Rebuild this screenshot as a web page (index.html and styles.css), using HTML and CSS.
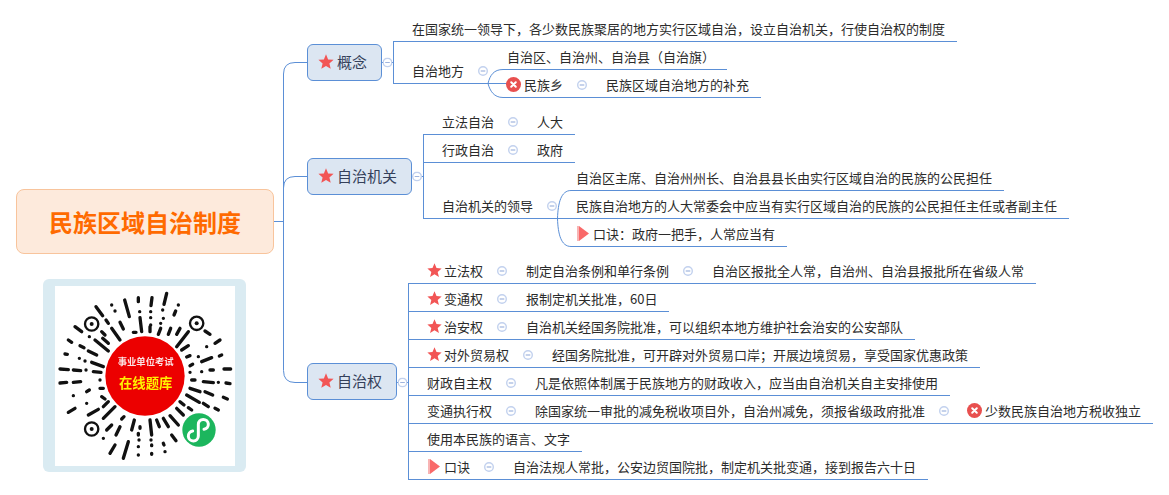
FILE: index.html
```html
<!DOCTYPE html>
<html lang="zh">
<head>
<meta charset="utf-8">
<title>民族区域自治制度</title>
<link rel="stylesheet" href="styles.css">
</head>
<body>
<svg class="defs" width="0" height="0" aria-hidden="true">
  <symbol id="fold" viewBox="0 0 10 10"><circle cx="5" cy="5" r="4.3" fill="#fff" stroke="#c2d1ee" stroke-width="1.4"/><path d="M2.7 5H7.3" stroke="#9fb4de" stroke-width="1.2"/></symbol>
  <symbol id="star" viewBox="0 0 24 24"><path d="M12 .5L15.2 8.1 23.4 8.8 17.1 14.2 19.05 22.2 12 17.9 4.95 22.2 6.9 14.2 .6 8.8 8.8 8.1z" fill="#f25555"/></symbol>
  <symbol id="no" viewBox="0 0 15 15"><circle cx="7.5" cy="7.5" r="7.5" fill="#e8504f"/><path d="M5.2 5.2l4.6 4.6M9.8 5.2l-4.6 4.6" stroke="#fff" stroke-width="2" stroke-linecap="round"/></symbol>
  <symbol id="flag" viewBox="0 0 12 15"><rect x="0" y="0" width="2" height="15" fill="#f8b4b4"/><path d="M2 0L12 7.5 2 15z" fill="#f96a6a"/></symbol>
</svg>

<main class="canvas">
  <svg class="links" width="1169" height="495" viewBox="0 0 1169 495" fill="none" stroke="#5b8fd6">
    <path d="M274 221.5H283.5M307 62.5H295Q283.5 62.5 283.5 74V370.5Q283.5 382.5 295 382.5H307M283.5 188Q283.5 176.5 295 176.5H307"/>
    <path d="M381 62.5H393.5M393.5 41V84"/>
    <path d="M488 83.5C490 75 494 69.5 503 69.5M488 83.5C490 91 494 97.5 503 97.5"/>
    <path d="M410 176.5H423.5M423.5 134V219"/>
    <path d="M557.5 218.5C558 203 561 190.5 571 190.5M557.5 218.5C558 234 561 246.5 571 246.5"/>
    <path d="M396 382.5H408.5"/>
    <use href="#fold" x="382.5" y="57.5" width="10" height="10"/>
    <use href="#fold" x="412" y="171.5" width="10" height="10"/>
    <use href="#fold" x="397.5" y="377.5" width="10" height="10"/>
  </svg>

  <div class="root">民族区域自治制度</div>

  <div class="topic topic-concept"><svg class="ico-topic"><use href="#star"/></svg>概念</div>
  <div class="topic topic-organ"><svg class="ico-topic"><use href="#star"/></svg>自治机关</div>
  <div class="topic topic-power"><svg class="ico-topic"><use href="#star"/></svg>自治权</div>

  <section class="col col-concept">
    <div class="row">在国家统一领导下，各少数民族聚居的地方实行区域自治，设立自治机关，行使自治权的制度</div>
    <div class="row tall-42 end-fold">自治地方<svg class="fold"><use href="#fold"/></svg></div>
  </section>
  <section class="col col-places">
    <div class="row pad-text">自治区、自治州、自治县（自治旗）</div>
    <div class="row"><svg class="ico-no"><use href="#no"/></svg>民族乡<svg class="fold"><use href="#fold"/></svg>民族区域自治地方的补充</div>
  </section>

  <section class="col col-organ">
    <div class="row">立法自治<svg class="fold"><use href="#fold"/></svg>人大</div>
    <div class="row">行政自治<svg class="fold"><use href="#fold"/></svg>政府</div>
    <div class="row tall-56 end-fold">自治机关的领导<svg class="fold"><use href="#fold"/></svg></div>
  </section>
  <section class="col col-leaders">
    <div class="row">自治区主席、自治州州长、自治县县长由实行区域自治的民族的公民担任</div>
    <div class="row">民族自治地方的人大常委会中应当有实行区域自治的民族的公民担任主任或者副主任</div>
    <div class="row"><svg class="ico-flag"><use href="#flag"/></svg>口诀：政府一把手，人常应当有</div>
  </section>

  <section class="col col-power">
    <div class="row"><svg class="ico-star"><use href="#star"/></svg>立法权<svg class="fold"><use href="#fold"/></svg>制定自治条例和单行条例<svg class="fold"><use href="#fold"/></svg>自治区报批全人常，自治州、自治县报批所在省级人常</div>
    <div class="row"><svg class="ico-star"><use href="#star"/></svg>变通权<svg class="fold"><use href="#fold"/></svg>报制定机关批准，60日</div>
    <div class="row"><svg class="ico-star"><use href="#star"/></svg>治安权<svg class="fold"><use href="#fold"/></svg>自治机关经国务院批准，可以组织本地方维护社会治安的公安部队</div>
    <div class="row"><svg class="ico-star"><use href="#star"/></svg>对外贸易权<svg class="fold"><use href="#fold"/></svg>经国务院批准，可开辟对外贸易口岸；开展边境贸易，享受国家优惠政策</div>
    <div class="row">财政自主权<svg class="fold"><use href="#fold"/></svg>凡是依照体制属于民族地方的财政收入，应当由自治机关自主安排使用</div>
    <div class="row">变通执行权<svg class="fold"><use href="#fold"/></svg>除国家统一审批的减免税收项目外，自治州减免，须报省级政府批准<svg class="fold"><use href="#fold"/></svg><svg class="ico-no"><use href="#no"/></svg>少数民族自治地方税收独立</div>
    <div class="row">使用本民族的语言、文字</div>
    <div class="row"><svg class="ico-flag"><use href="#flag"/></svg>口诀<svg class="fold"><use href="#fold"/></svg>自治法规人常批，公安边贸国院批，制定机关批变通，接到报告六十日</div>
  </section>

  <figure class="qr-card">
    <svg class="qr" viewBox="45 33 540 540" width="180" height="180">
      <g fill="none" stroke="#111" stroke-width="10" stroke-linecap="round">
        <path d="M168 95L188 122M215 90h.1M225 108h.1M254 75L268 125M295 68V80M336 68L333 92M380 55L372 88M415 90h.1M407 108L402 120M299 110h.1M332 110h.1M368 105h.1"/>
        <path d="M300 128L305 170M332 128h.1M332 150h.1M362 145h.1M370 130h.1M240 142L250 162M198 135L205 145M105 155L125 170M185 170L195 180M215 160L240 195M165 195L205 228M188 190L205 205M280 172h8M330 155V170M355 178L362 160M385 178L392 160M410 178L420 160M445 170L410 215M495 168L510 178"/>
        <path d="M85 195L95 202M120 212L132 218M148 185h.1M145 228L170 240M540 195L525 205M425 225L445 212M75 237L82 238M118 250h.1M135 258h.1M155 262L190 275M450 242L440 246M475 245h.1M500 215h.1M485 260L515 248M538 243L545 240"/>
        <path d="M60 282L85 284M100 285L122 287M138 285h.1M160 290L183 292M450 272L458 268M450 292h.1M510 285H520M485 290h.1M552 282H572M60 324L80 322M100 322L122 320M180 315h.1M455 315H465M490 320L520 323M535 322h.1M558 324L570 326"/>
        <path d="M140 350L148 345M180 340H190M100 362h.1M140 385h.1M185 365L195 372M450 340L480 350M495 350L518 360M440 360L478 382M550 367L562 372M85 412L105 400M145 420L175 403M190 395L205 380M190 430L225 395M490 385L505 395M525 400L535 405M420 380L432 390M445 398L455 405M410 400L430 420M390 422L415 450M370 430L385 455M350 435L358 455"/>
        <path d="M275 465L283 435M245 432L252 425M300 455V460M330 435L335 480M200 465L215 450M190 490h.1M240 455L228 480M210 535L225 510M250 550L265 500M295 475V480M297 495h.1M295 515h.1M295 540h.1M333 495h.1M335 510V512M335 535V538M370 505L372 510M375 530h.1M395 480L408 497"/>
        <g stroke-width="7">
          <circle cx="155" cy="147" r="20"/><circle cx="470" cy="145" r="20"/><circle cx="155" cy="462" r="20"/>
        </g>
      </g>
      <g fill="#111"><circle cx="155" cy="147" r="6"/><circle cx="470" cy="145" r="6"/><circle cx="155" cy="462" r="6"/></g>
      <circle cx="315" cy="303" r="119" fill="#ec0000"/>
      <text class="qr-top" x="317" y="269">事业单位考试</text>
      <text class="qr-main" x="317" y="340">在线题库</text>
      <circle cx="477" cy="465" r="50" fill="#1cb65d"/>
      <path d="M458 468a15 15 0 1 0 17 15V448a15 15 0 1 1 17 15" fill="none" stroke="#fff" stroke-width="9" stroke-linecap="round"/>
    </svg>
  </figure>
</main>
</body>
</html>
```

FILE: styles.css
```css
* { box-sizing: border-box; }

html, body {
  margin: 0;
  background: #fff;
}

body {
  font-family: "Noto Sans CJK SC", "Liberation Sans", sans-serif;
  font-size: 13px;
  color: #2b2b2b;
}

.defs { position: absolute; }

.canvas {
  position: relative;
  width: 1169px;
  height: 495px;
  overflow: hidden;
}

.links {
  position: absolute;
  left: 0;
  top: 0;
}

/* root node */
.root {
  position: absolute;
  left: 16px;
  top: 189px;
  width: 258px;
  height: 65px;
  display: flex;
  align-items: center;
  justify-content: center;
  background: #fdeadc;
  border: 1px solid #f8c49c;
  border-radius: 8px;
  color: #ff6a00;
  font-size: 24px;
  font-weight: 700;
}

/* first-level topics */
.topic {
  position: absolute;
  left: 307px;
  height: 37px;
  display: flex;
  align-items: center;
  gap: 3px;
  padding: 0 14px 2px 10px;
  background: #dce6f2;
  border: 1px solid #5b8fd6;
  border-radius: 6px;
  color: #34405a;
  font-size: 15px;
}
.topic-concept { top: 44px; }
.topic-organ { top: 158px; }
.topic-power { top: 363px; }

.ico-topic { width: 16px; height: 16px; }

/* branch columns */
.col {
  position: absolute;
  display: flex;
  flex-direction: column;
  align-items: flex-start;
}
.col-concept { left: 393px; top: 14px; }
.col-places { left: 503px; top: 42px; }
.col-organ { left: 423px; top: 107px; }
.col-leaders { left: 571px; top: 163px; }
.col-power { left: 408px; top: 256px; }

.row {
  height: 28px;
  display: flex;
  align-items: center;
  padding: 1px 12px 0 19px;
  border-bottom: 1px solid #5b8fd6;
  white-space: nowrap;
}
.col-places .row { padding-left: 3px; }
.col-places .pad-text { padding-left: 4px; }
.col-leaders .row { padding-left: 5px; }

.tall-42 { height: 42px; padding-top: 15px; }
.tall-56 { height: 56px; padding-top: 29px; }
.end-fold { padding-right: 1px; }

.col-power .row + .row { border-left: 1px solid #5b8fd6; padding-left: 18px; }
.col-power .row:first-child { padding-left: 19px; }

/* inline icons */
.fold {
  flex: none;
  width: 10px;
  height: 10px;
  margin: 1px 19px 0 14px;
}
.ico-star {
  flex: none;
  width: 15px;
  height: 15px;
  margin-right: 2px;
}
.ico-no {
  flex: none;
  width: 15px;
  height: 15px;
  margin-right: 3px;
}
.fold + .ico-no {
  margin-left: -1px;
  margin-right: 3px;
}
.ico-flag {
  flex: none;
  width: 12px;
  height: 15px;
  margin: 0 4px 0 1px;
}

/* QR card */
.qr-card {
  position: absolute;
  left: 43px;
  top: 279px;
  width: 203px;
  height: 193px;
  margin: 0;
  padding: 7px 11px 6px 12px;
  background: #daebf2;
  border-radius: 6px;
}
.qr {
  display: block;
  background: #fff;
  filter: blur(0.35px);
}
.qr-top {
  fill: #fbe3e3;
  font-size: 28px;
  font-weight: 700;
  text-anchor: middle;
}
.qr-main {
  fill: #fff200;
  font-size: 40px;
  font-weight: 700;
  text-anchor: middle;
}
```
